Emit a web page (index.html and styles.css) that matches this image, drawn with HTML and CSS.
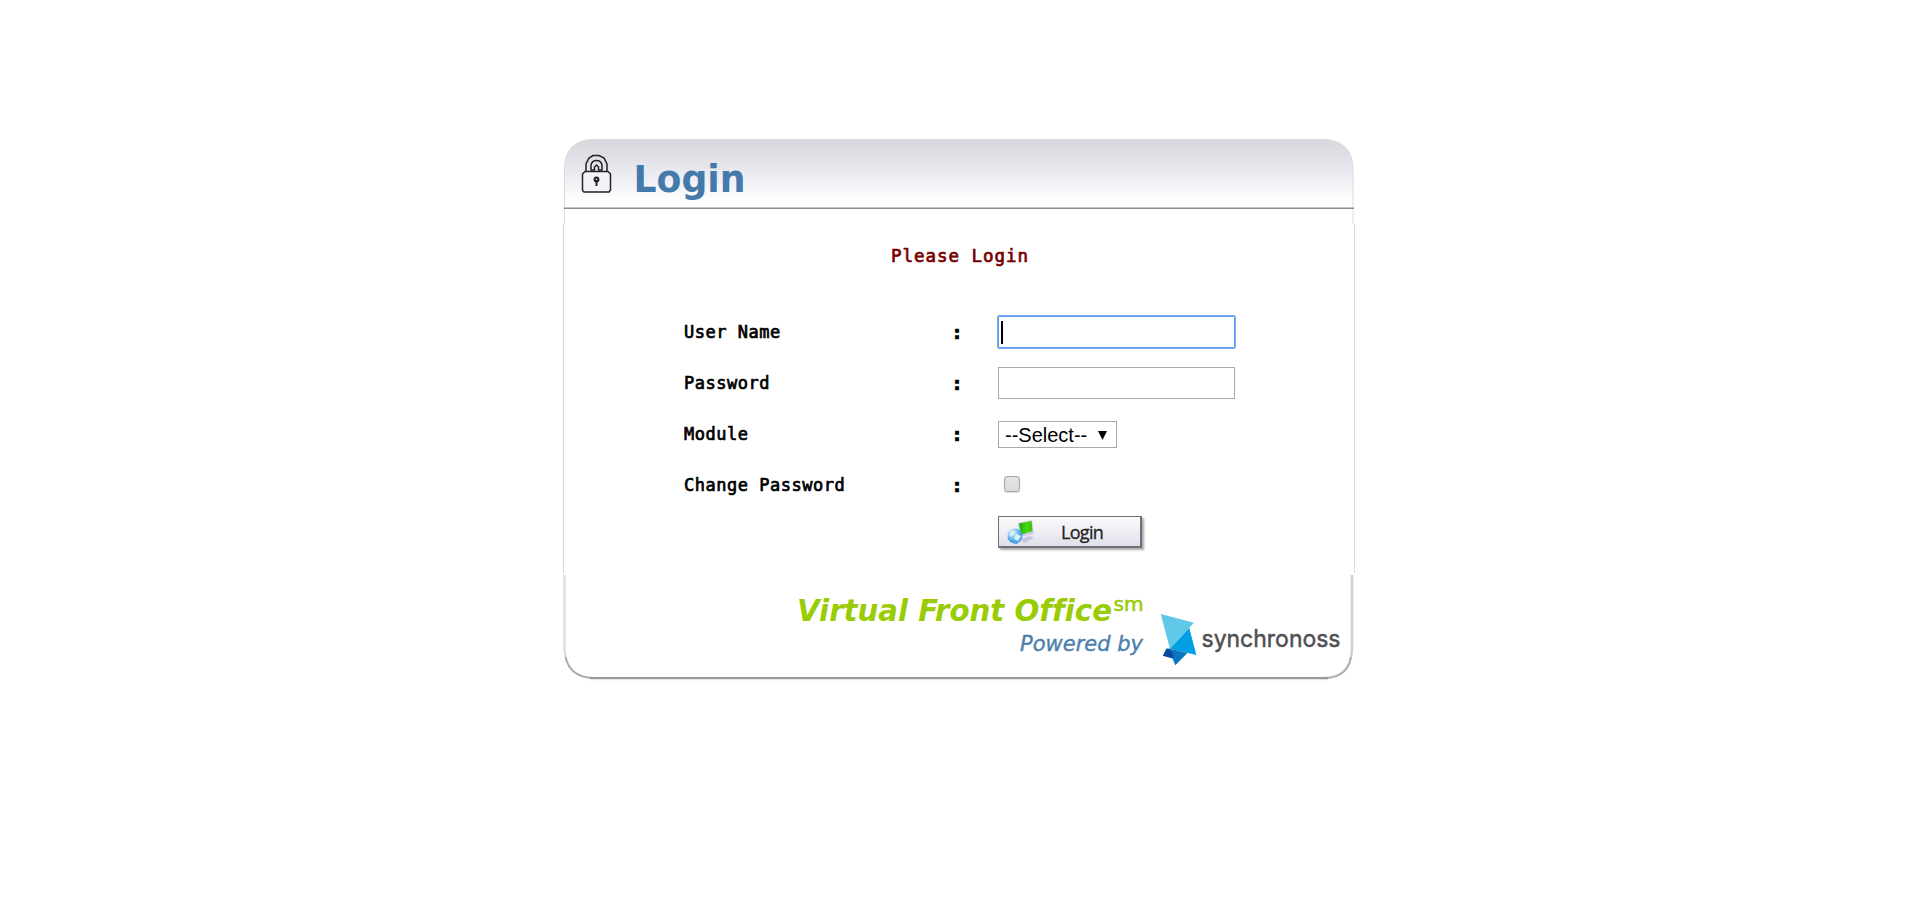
FILE: index.html
```html
<!DOCTYPE html>
<html lang="en">
<head>
<meta charset="utf-8">
<title>Login</title>
<link rel="stylesheet" href="styles.css">
</head>
<body>
<main class="card">
  <svg class="card-header" width="792" height="86" viewBox="-1 0 792 86" role="img" aria-label="Login">
    <defs>
      <linearGradient id="head" x1="0" y1="0" x2="0" y2="1">
        <stop offset="0" stop-color="#d7d8de"/>
        <stop offset=".25" stop-color="#dfdfe6"/>
        <stop offset=".6" stop-color="#efeff5"/>
        <stop offset=".85" stop-color="#fcfcfd"/>
        <stop offset="1" stop-color="#fff"/>
      </linearGradient>
    </defs>
    <path d="M1 70V32Q1 1 32 1H758Q790 1 790 32V70Z" fill="url(#head)"/>
    <path d="M1.500 86V32Q1.500 1.500 32 1.500M758 1.500Q790 1.500 790 32V86" fill="none" stroke="#dcdcdf"/>
    <path d="M1 70.200H791" stroke="#8b8b8b" stroke-width="1.600"/>
    <g fill="none" stroke="#222" stroke-width="1.500">
      <path d="M22 33.500H45L47.500 36V52L46 54H21L19.500 52.500V36Z" fill="#f3f3f7"/>
      <path d="M23 33V26L26 20L30 17.500H36L41 20L44 26V33M28 32V27Q29 22.500 33.500 22.500T39 27V32H35.500V29L33.500 27L31.500 29V32Z"/>
    </g>
    <circle cx="33.500" cy="41.500" r="2.900" fill="#222"/>
    <circle cx="33.500" cy="41.200" r=".8" fill="#fff"/>
    <path d="M33.500 42V48" stroke="#222" stroke-width="2"/>
    <text class="title" x="70.500" y="54" textLength="112" lengthAdjust="spacingAndGlyphs">Login</text>
  </svg>
  <form class="card-body" onsubmit="return false">
    <p class="message">Please Login</p>
    <div class="fields">
      <label class="label" for="user">User Name</label><span class="colon">:</span>
      <span class="input input-focus" id="user" role="textbox" tabindex="0"><span class="caret"></span></span>
      <label class="label" for="password">Password</label><span class="colon">:</span>
      <input class="input" id="password" type="password">
      <label class="label">Module</label><span class="colon">:</span>
      <span class="select" role="combobox">--Select--<svg width="9" height="9" viewBox="0 0 9 9"><path d="M0 0H9L4.500 9Z"/></svg></span>
      <label class="label" for="change">Change Password</label><span class="colon">:</span>
      <input class="check" id="change" type="checkbox">
      <button class="login" type="submit">
        <svg width="30" height="28" viewBox="0 0 30 28">
          <defs>
            <linearGradient id="screen"><stop offset="0" stop-color="#20a817"/><stop offset=".6" stop-color="#49dc0c"/><stop offset="1" stop-color="#2fbf10"/></linearGradient>
            <radialGradient id="globe" cx=".35" cy=".3"><stop offset="0" stop-color="#e5f8ff"/><stop offset="1" stop-color="#4da4ee"/></radialGradient>
          </defs>
          <path d="M12 5L26 2L28 16L13 19Z" fill="#cfcdea"/>
          <path d="M13 5.500L25.500 3L26.500 13L15 17Z" fill="url(#screen)"/>
          <path d="M15 21L24 18L28 20L18 25Z" fill="#c5c3e4"/>
          <circle cx="9" cy="18" r="7.500" fill="url(#globe)"/>
          <path d="M5 13L9 12L7 17L3 18ZM10 16L15 18L12 23L8 21Z" fill="#d5f4ee"/>
          <path d="M2 20Q5 26 12 25" fill="none" stroke="#4b98e2"/>
        </svg>
        <span>Login</span>
      </button>
    </div>
  </form>
  <svg class="card-footer" width="792" height="107" viewBox="562 574 792 107" role="img" aria-label="Virtual Front Office, powered by synchronoss">
    <path d="M564.500 575V650Q567 678 594 678" fill="none" stroke="#dedede" stroke-width="2.500"/>
    <path d="M1352 575V650Q1350 678 1324 678" fill="none" stroke="#cfcfcf" stroke-width="2.500"/>
    <path d="M565.500 657Q570 678 595 678H1324Q1348 678 1351 657" fill="none" stroke="#aaa" stroke-width="1.500"/>
    <path d="M590 678H1328" stroke="#999" stroke-width="2"/>
    <path d="M590 679.700H1328" stroke="#ddd"/>
    <text class="product" x="797" y="621" textLength="315" lengthAdjust="spacingAndGlyphs">Virtual Front Office</text>
    <text class="mark" x="1113.500" y="611" textLength="30" lengthAdjust="spacingAndGlyphs">sm</text>
    <text class="powered" x="1020" y="651" textLength="123" lengthAdjust="spacingAndGlyphs">Powered by</text>
    <path d="M1160.700 614L1194 622.700L1170 649Z" fill="#60c8e8"/>
    <path d="M1189.300 628L1196.300 655L1170 648.700Z" fill="#009fe3"/>
    <path d="M1170 648.700L1187.500 653L1175.300 665.300L1172.500 658.500Z" fill="#0a75c2"/>
    <path d="M1166.500 648.500L1170 648.700L1173.500 656L1172.500 658.500L1162.700 655.700Z" fill="#054c9c"/>
    <text class="brand" x="1201.500" y="646.500" textLength="139" lengthAdjust="spacingAndGlyphs">synchronoss</text>
  </svg>
</main>
</body>
</html>
```
FILE: styles.css
```css
* { box-sizing: border-box; }
body { margin: 0; padding-top: 138px; background: #fff; }
.card { width: 792px; margin: 0 0 0 562px; }
.card-header, .card-footer { display: block; }
.title { font: bold 36.5px Verdana, "DejaVu Sans", sans-serif; fill: #447aaa; }
.card-body {
  width: 792px; height: 349px; margin-left: 1px; padding-top: 19px;
  border: solid #d9d9d9; border-width: 0 1px; margin-bottom: 1px;
}
.message {
  margin: 0 0 38px; padding-left: 2px; text-align: center;
  font: 17.5px/26px Consolas, "DejaVu Sans Mono", monospace;
  letter-spacing: .960px; color: #780000; -webkit-text-stroke: .7px;
}
.fields {
  display: grid; grid-template-columns: 268px 46px 240px;
  grid-auto-rows: 51px; align-items: start; padding-left: 120px;
}
.label, .colon {
  margin-top: 9px; color: #000; white-space: nowrap;
  font: 17px/33px Consolas, "DejaVu Sans Mono", monospace;
  letter-spacing: .520px; -webkit-text-stroke: .7px;
}
.colon { font-size: 20px; font-weight: bold; margin-left: -1px; }
.input {
  width: 237px; height: 32px; margin: 9px 0 0; padding: 2px;
  border: 1px solid #a9a9a9; border-radius: 0; background: #fff;
}
.input-focus {
  padding: 4px 2px; border-color: #5e9bf5; outline: 1px solid #78aaf3; border-radius: 1px;
}
.caret { display: block; width: 2px; height: 23px; background: #000; }
.select {
  display: flex; align-items: center; gap: 11px;
  width: 119px; height: 27px; margin-top: 12px; padding: 1px 6px 0;
  border: 1px solid #a9a9a9;
  font: 20px/25px Arial, "Liberation Sans", sans-serif;
}
.check {
  appearance: none; width: 16px; height: 16px; margin: 16px 0 0 6px;
  border: 1px solid #a6a6a6; border-radius: 3px;
  background: linear-gradient(#e3e3e3, #dcdcdc); box-shadow: 0 1px 1px #ddd;
}
.login {
  grid-column: 3; display: flex; align-items: center; gap: 25px;
  width: 144px; height: 32px; margin: 5px 0 0; padding: 0 7px;
  border: 1px solid #707078; border-right-width: 2px; border-bottom-width: 2px;
  background: linear-gradient(#fafafc, #ededf3 55%, #dfdfe9);
  box-shadow: 2px 2px 2px #aaa;
  font: 500 18px/24px "Open Sans", sans-serif; color: #222; letter-spacing: -.700px;
  -webkit-text-stroke: .3px;
}
.product { font: italic bold 29.5px Verdana, "DejaVu Sans", sans-serif; font-variant-ligatures: none; fill: #99cc05; }
.mark { font: 19px Verdana, "DejaVu Sans", sans-serif; fill: #99cc05; stroke: #99cc05; stroke-width: .5px; }
.powered { font: italic 21px Verdana, "DejaVu Sans", sans-serif; fill: #4d7fac; stroke: #4d7fac; stroke-width: .4px; }
.brand { font: 24px Inter, sans-serif; fill: #505052; stroke: #505052; stroke-width: .5px; }
```
